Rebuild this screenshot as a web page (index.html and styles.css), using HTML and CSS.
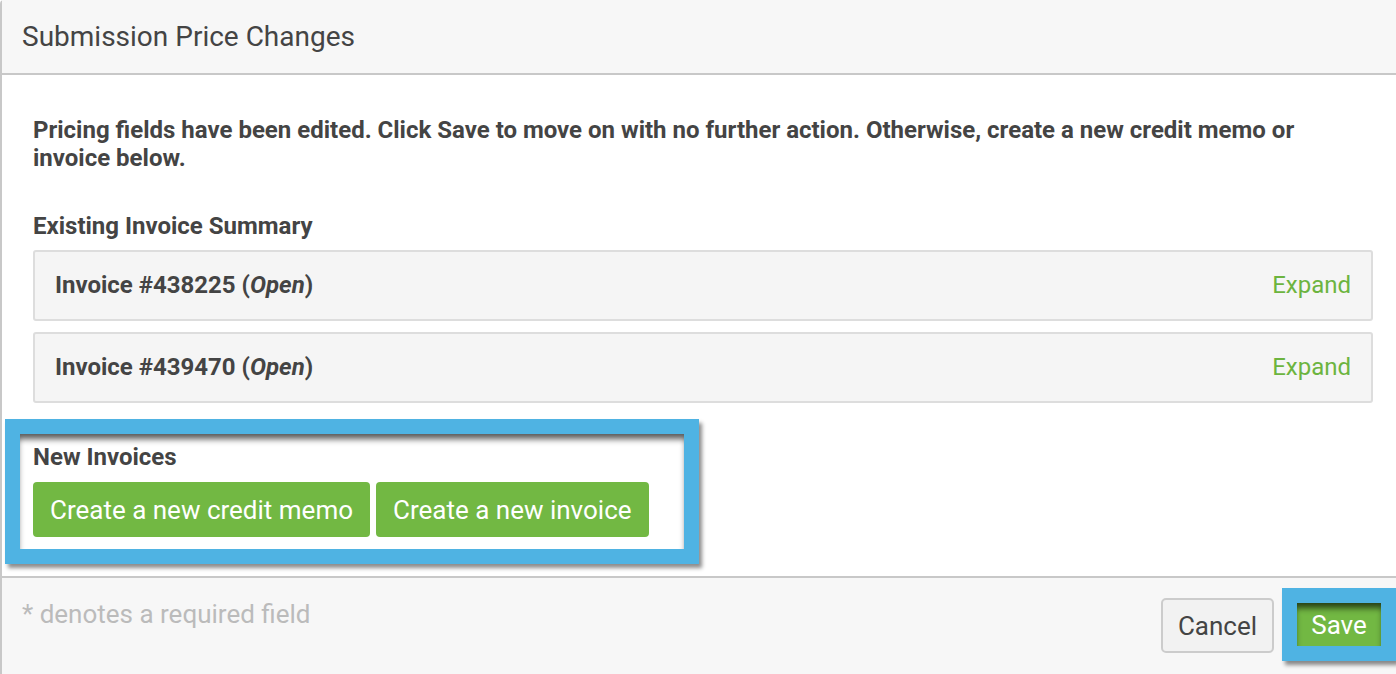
FILE: index.html
```html
<!DOCTYPE html>
<html>
<head>
  <meta charset="utf-8">
  <title>Submission Price Changes</title>
  <link rel="stylesheet" href="styles.css">
</head>
<body>
  <div class="modal">
    <div class="modal-header">
      <h1>Submission Price Changes</h1>
    </div>

    <div class="modal-body">
      <p class="notice">Pricing fields have been edited. Click Save to move on with no further action. Otherwise, create a new credit memo or invoice below.</p>

      <h2>Existing Invoice Summary</h2>
      <div class="invoice-list">
        <div class="invoice-item">
          <span class="invoice-title">Invoice #438225 (<em>Open</em>)</span>
          <a class="expand-link" href="#">Expand</a>
        </div>
        <div class="invoice-item">
          <span class="invoice-title">Invoice #439470 (<em>Open</em>)</span>
          <a class="expand-link" href="#">Expand</a>
        </div>
      </div>

      <!-- highlighted section -->
      <div class="new-invoices highlight">
        <h2>New Invoices</h2>
        <div class="btn-row">
          <button type="button" class="btn btn-green">Create a new credit memo</button>
          <button type="button" class="btn btn-green">Create a new invoice</button>
        </div>
      </div>
    </div>

    <div class="modal-footer">
      <span class="required-note">* denotes a required field</span>
      <div class="footer-actions">
        <button type="button" class="btn btn-cancel">Cancel</button>
        <div class="save-wrap highlight">
          <button type="button" class="btn btn-save">Save</button>
        </div>
      </div>
    </div>
  </div>
</body>
</html>
```

FILE: styles.css
```css
html, body {
  margin: 0;
  padding: 0;
  overflow: hidden;
}

body {
  font-family: Roboto, "Liberation Sans", Arial, sans-serif;
  color: #444;
  background: white;
}

.modal {
  width: 1394px;
  border-left: 2px solid #c8c8c8;
  border-top-left-radius: 4px;
  min-height: 674px;
  display: flex;
  flex-direction: column;
}

.modal-header {
  height: 73px;
  display: flex;
  align-items: center;
  padding-left: 20px;
  background: #f7f7f7;
  border-bottom: 2px solid #c8c8c8;
}

.modal-header h1 {
  margin: 0;
  font-size: 28px;
  font-weight: 400;
  color: #444;
}

.modal-body {
  padding: 41px 23px 12px 31px;
}

.notice {
  margin: 0 0 42px 0;
  font-size: 24px;
  font-weight: 700;
  line-height: 28px;
}

.modal-body h2 {
  margin: 0;
  font-size: 24px;
  font-weight: 700;
  line-height: 24px;
}

.invoice-list {
  margin-top: 12px;
  display: flex;
  flex-direction: column;
  gap: 11px;
}

.invoice-item {
  display: flex;
  justify-content: space-between;
  align-items: center;
  padding: 21px 20px 21px 20px;
  background: #f5f5f5;
  border: 2px solid #ddd;
  border-radius: 3px;
  font-size: 24px;
  line-height: 25px;
}

.invoice-title {
  font-weight: 700;
}

.expand-link {
  color: #6cb43f;
  text-decoration: none;
}

.highlight {
  border: 15px solid #4fb3e3;
  box-shadow: 3px 4px 4px rgba(0,0,0,0.45), inset 0 7px 6px -2px rgba(0,0,0,0.65);
}

.new-invoices {
  width: 651px;
  margin: 16px 0 0 -28px;
  padding: 11px 0 12px 13px;
  background: white;
}

.btn-row {
  display: flex;
  gap: 6px;
  margin-top: 13px;
}

.btn {
  font-family: Roboto, "Liberation Sans", Arial, sans-serif;
  font-size: 26px;
  border: none;
  cursor: pointer;
}

.btn-green {
  height: 55px;
  padding: 0 17px;
  background: #72b843;
  color: white;
  border-radius: 4px;
}

.modal-footer {
  flex: 1;
  display: flex;
  justify-content: space-between;
  align-items: flex-start;
  background: #f7f7f7;
  border-top: 2px solid #c8c8c8;
  padding: 10px 0 0 20px;
}

.required-note {
  margin-top: 11px;
  font-size: 26px;
  color: #bbb;
}

.footer-actions {
  display: flex;
  align-items: center;
  gap: 8px;
}

.btn-cancel {
  height: 55px;
  width: 113px;
  background: #f2f2f2;
  border: 2px solid #ccc;
  border-radius: 5px;
  color: #444;
  margin-top: 2px;
}

.save-wrap {
  display: flex;
  background: #72b843;
}

.btn-save {
  width: 84px;
  height: 43px;
  padding: 0;
  background: transparent;
  color: white;
}
```
